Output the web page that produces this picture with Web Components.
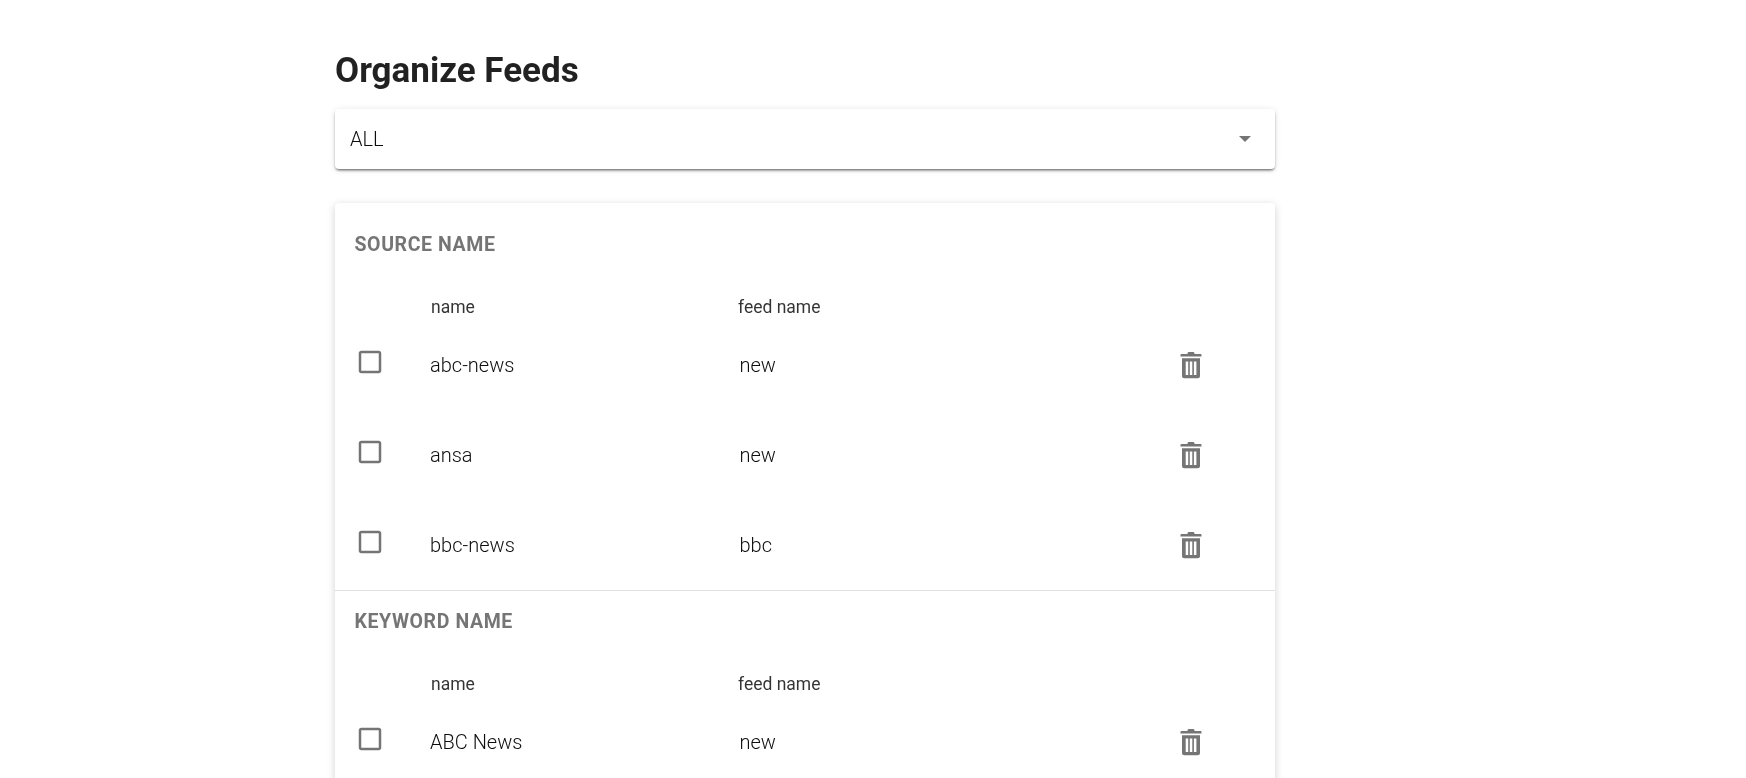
<!DOCTYPE html>
<html>
<head>
<meta charset="utf-8">
<style>
  html, body { margin: 0; height: 778px; overflow: hidden; background: #fff; }
  body { font-family: Roboto, "Liberation Sans", sans-serif; color: rgba(0,0,0,.87); }
</style>
</head>
<body>
<template id="row-tpl">
  <style>
    :host { display: grid; grid-template-columns: 95px 309.500px 1fr 96.500px; height: 90px; align-items: center; }
    .check { padding-left: 19.500px; display: flex; margin-top: -6px; }
    .name, .feed { font-size: 20px; font-weight: 300; color: rgba(0,0,0,.95); }
    .trash { display: flex; }
    svg { display: block; }
  </style>
  <div class="check">
    <svg width="30" height="30" viewBox="0 0 24 24" fill="#757575"><path d="M19 5v14H5V5h14m0-2H5c-1.1 0-2 .9-2 2v14c0 1.1.9 2 2 2h14c1.1 0 2-.9 2-2V5c0-1.1-.9-2-2-2z"/></svg>
  </div>
  <div class="name"><slot name="name"></slot></div>
  <div class="feed"><slot name="feed"></slot></div>
  <div class="trash">
    <svg width="24" height="28" viewBox="0 0 24 28" fill="#757575"><path fill-rule="evenodd" d="M8.500 2.200C8.700 1.300 9.400 1 10 1h4c.6 0 1.300.3 1.500 1.200V3h6c.6 0 1 .4 1 1v1.600H1.500V4c0-.6.4-1 1-1h6zM3 7.300h18V25c0 1.300-1 2.300-2.300 2.300H5.300C4 27.300 3 26.300 3 25zM6.700 10.500v13.500h2.500V10.500zM10.800 10.500v13.500h2.500V10.500zM14.900 10.500v13.500h2.500V10.500z"/></svg>
  </div>
</template>

<script>
class FeedRow extends HTMLElement {
  constructor() {
    super();
    this.attachShadow({ mode: 'open' });
    this.shadowRoot.appendChild(document.getElementById('row-tpl').content.cloneNode(true));
  }
}
customElements.define('feed-row', FeedRow);

class FeedSection extends HTMLElement {
  static get observedAttributes() { return ['heading']; }

  constructor() {
    super();
    this.attachShadow({ mode: 'open' });
    this.shadowRoot.innerHTML = `
      <style>
        :host { display: block; }
        :host([divided]) { border-top: 1px solid #e0e0e0; }
        h3 { margin: 0; padding: 18px 0 0 19.500px; font-size: 19.500px; line-height: 28px; font-weight: 700; color: #757575; letter-spacing: .6px; }
        :host([divided]) h3 { padding-top: 17px; }
        .head { display: grid; grid-template-columns: 96px 307px 1fr; padding-top: 35px; height: 26px; align-items: center; font-size: 17.500px; font-weight: 400; color: rgba(0,0,0,.8); }
        .head span:first-child { grid-column: 2; }
      </style>
      <h3></h3>
      <div class="head"><span>name</span><span>feed name</span></div>
      <slot></slot>
    `;
  }

  attributeChangedCallback(name, oldVal, newVal) {
    if (name === 'heading') this.shadowRoot.querySelector('h3').textContent = newVal || '';
  }
}
customElements.define('feed-section', FeedSection);

class FeedSelect extends HTMLElement {
  constructor() {
    super();
    this.attachShadow({ mode: 'open' });
    this.shadowRoot.innerHTML = `
      <style>
        :host { display: flex; align-items: center; justify-content: space-between; height: 60px; box-sizing: border-box; padding: 0 24px 0 15px; background: #fff; border-radius: 4px; box-shadow: 0 2px 3px -1px rgba(0,0,0,.65), 0 1px 6px rgba(0,0,0,.12); font-size: 20px; font-weight: 300; color: rgba(0,0,0,.95); }
        i { width: 0; height: 0; border-left: 6.500px solid transparent; border-right: 6.500px solid transparent; border-top: 6.500px solid #757575; }
      </style>
      <slot></slot><i></i>
    `;
  }
}
customElements.define('feed-select', FeedSelect);

class FeedCard extends HTMLElement {
  constructor() {
    super();
    this.attachShadow({ mode: 'open' });
    this.shadowRoot.innerHTML = `
      <style>
        :host { display: block; margin-top: 34px; padding-top: 10px; background: #fff; border-radius: 4px; box-shadow: 0 2px 8px rgba(0,0,0,.18); }
      </style>
      <slot></slot>
    `;
  }
}
customElements.define('feed-card', FeedCard);

class OrganizePage extends HTMLElement {
  constructor() {
    super();
    this.attachShadow({ mode: 'open' });
    this.shadowRoot.innerHTML = `
      <style>
        :host { display: block; width: 940px; margin-left: 335px; padding-top: 48px; will-change: transform; }
        h1 { margin: 0 0 15px; font-size: 35px; line-height: 46px; font-weight: 700; color: rgba(0,0,0,.87); }
      </style>
      <h1><slot name="title"></slot></h1>
      <slot></slot>
    `;
  }
}
customElements.define('organize-page', OrganizePage);
</script>

<organize-page>
  <span slot="title">Organize Feeds</span>
  <feed-select>ALL</feed-select>
  <feed-card>
    <feed-section heading="SOURCE NAME">
      <feed-row><span slot="name">abc-news</span><span slot="feed">new</span></feed-row>
      <feed-row><span slot="name">ansa</span><span slot="feed">new</span></feed-row>
      <feed-row><span slot="name">bbc-news</span><span slot="feed">bbc</span></feed-row>
    </feed-section>
    <feed-section heading="KEYWORD NAME" divided>
      <feed-row><span slot="name">ABC News</span><span slot="feed">new</span></feed-row>
    </feed-section>
  </feed-card>
</organize-page>
</body>
</html>
